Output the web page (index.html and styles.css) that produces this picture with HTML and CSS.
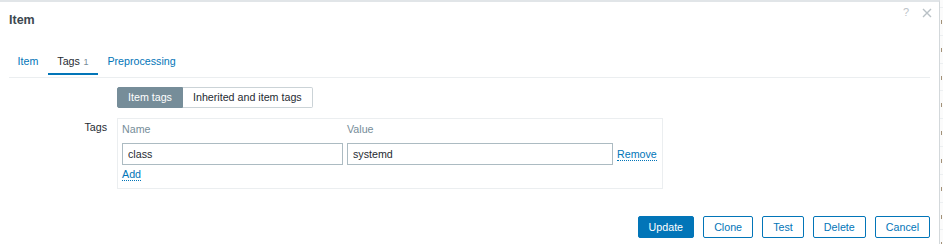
FILE: index.html
```html
<!DOCTYPE html>
<html lang="en">
<head>
  <meta charset="UTF-8" />
  <title>Item</title>
  <link rel="stylesheet" href="styles.css">
</head>
<body>
  <div class="page">
    <div class="dialog">
      <div class="dialog-header">
        <h4>Item</h4>
        <div class="header-tools">
          <span class="help">?</span>
          <svg class="close" width="10" height="10" viewBox="0 0 10 10">
            <path d="M1 1 L9 9 M9 1 L1 9" stroke="#b9c1c6" stroke-width="1.4" fill="none"/>
          </svg>
        </div>
      </div>

      <div class="dialog-body">
        <ul class="tabs">
          <li><a href="#">Item</a></li>
          <li class="active"><a href="#">Tags<span class="count">1</span></a></li>
          <li><a href="#">Preprocessing</a></li>
        </ul>

        <div class="form">
          <div class="form-row">
            <div class="form-label"></div>
            <div class="form-field">
              <div class="radio-group">
                <span class="radio checked">Item tags</span>
                <span class="radio">Inherited and item tags</span>
              </div>
            </div>
          </div>
          <div class="form-row">
            <div class="form-label tags-label">Tags</div>
            <div class="form-field">
              <div class="tags-table">
                <div class="col-head">Name</div>
                <div class="col-head">Value</div>
                <div></div>
                <input class="text-input" type="text" value="class">
                <input class="text-input" type="text" value="systemd">
                <a class="link-action remove" href="#">Remove</a>
                <div class="add-cell"><a class="link-action" href="#">Add</a></div>
              </div>
            </div>
          </div>
        </div>
      </div>

      <div class="dialog-footer">
        <button class="btn primary">Update</button>
        <button class="btn">Clone</button>
        <button class="btn">Test</button>
        <button class="btn">Delete</button>
        <button class="btn">Cancel</button>
      </div>
    </div>
    <div class="backdrop"></div>
  </div>
</body>
</html>
```
FILE: styles.css
```css
body {
  margin: 0;
  font-family: "Liberation Sans", Arial, sans-serif;
  font-size: 10.7px;
  color: #1f2c33;
  background: #fff;
}

.page {
  display: flex;
  height: 244px;
  overflow: hidden;
}

.dialog {
  width: 940px;
  box-sizing: border-box;
  border-top: 2px solid #e1e5e8;
  border-right: 1px solid #d3d8db;
  display: flex;
  flex-direction: column;
  background: #fff;
}

.dialog-header {
  display: flex;
  justify-content: space-between;
  align-items: flex-start;
  padding: 6px 7px 0 9px;
}

.dialog-header h4 {
  margin: 5px 0 0;
  font-size: 12.5px;
  line-height: 15px;
  font-weight: bold;
  color: #3c4850;
}

.header-tools {
  display: flex;
  align-items: center;
  gap: 13px;
  height: 9px;
}

.help {
  color: #bcc3c8;
  font-size: 11px;
  line-height: 9px;
}

.close {
  display: block;
}

.dialog-body {
  padding: 0 9px;
}

.tabs {
  display: flex;
  list-style: none;
  margin: 22px 0 0;
  padding: 0 0 2px;
  border-bottom: 1px solid #ebeef0;
}

.tabs li:first-child {
  margin-left: -1px;
}

.tabs a {
  display: block;
  padding: 0 9.5px;
  line-height: 22px;
  border-bottom: 2px solid transparent;
  color: #0275b8;
  text-decoration: none;
}

.tabs .active a {
  color: #1f2c33;
  border-bottom-color: #0275b8;
}

.tabs .count {
  margin-left: 3.5px;
  font-size: 9px;
  color: #768d99;
}

.form {
  margin-top: 9px;
}

.form-row {
  display: grid;
  grid-template-columns: 98px 1fr;
  column-gap: 10px;
  margin-bottom: 10px;
}

.form-label {
  text-align: right;
}

.tags-label {
  padding-top: 3px;
  line-height: 13px;
}

.form-field {
  display: flex;
  align-items: flex-start;
}

.radio-group {
  display: flex;
}

.radio {
  height: 21px;
  box-sizing: border-box;
  line-height: 19px;
  padding: 0 10px;
  border: 1px solid #cbd3d7;
  background: #fff;
  color: #1f2c33;
}

.radio:first-child {
  border-radius: 2px 0 0 2px;
}

.radio:last-child {
  border-left: none;
  border-radius: 0 2px 2px 0;
}

.radio.checked {
  background: #768d99;
  border-color: #768d99;
  color: #fff;
}

.tags-table {
  display: grid;
  grid-template-columns: 221px 266px auto;
  column-gap: 4px;
  align-items: center;
  padding: 0 5px 7px 4px;
  border: 1px solid #ebeef0;
}

.col-head {
  padding: 4px 0 7px;
  line-height: 13px;
  color: #768d99;
}

.text-input {
  height: 22px;
  box-sizing: border-box;
  margin: 0;
  padding: 0 5px;
  border: 1px solid #acbbc2;
  border-radius: 0;
  font-family: inherit;
  font-size: 10.7px;
  color: #1f2c33;
  background: #fff;
}

.link-action {
  color: #0275b8;
  text-decoration: none;
  border-bottom: 1px dotted #0275b8;
  line-height: 12px;
}

.remove {
  justify-self: start;
  margin-top: 1px;
}

.add-cell {
  grid-column: 1 / 4;
  margin-top: 3px;
  line-height: 13px;
}

.dialog-footer {
  margin-top: auto;
  display: flex;
  justify-content: flex-end;
  gap: 9.3px;
  padding: 0 9px 6px;
}

.btn {
  height: 22px;
  box-sizing: border-box;
  padding: 0 9.9px;
  border: 1px solid #0275b8;
  border-radius: 2px;
  background: #fff;
  color: #0275b8;
  font-family: inherit;
  font-size: 10.7px;
}

.btn.primary {
  background: #0275b8;
  color: #fff;
}

.backdrop {
  flex: 1;
  background:
    repeating-linear-gradient(to bottom, transparent 0 20px, #a39178 20px 24px, transparent 24px 27.8px) 1px 0 / 1px 100% no-repeat,
    repeating-linear-gradient(to bottom, #fbfbfb 0 7px, #eceff1 7px 8px, #fbfbfb 8px 27.8px);
}
```
